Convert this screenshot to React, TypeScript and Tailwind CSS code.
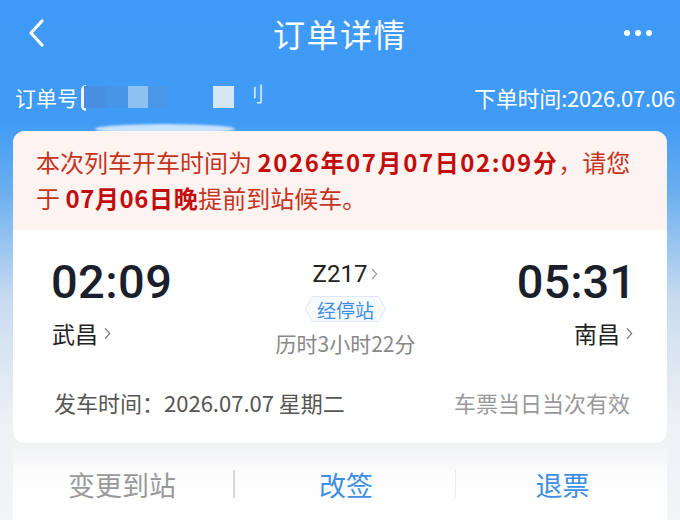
import React from "react";

const cjk = '"Noto Sans CJK SC", "Noto Sans", sans-serif';
const num = 'Roboto, "Noto Sans CJK SC", sans-serif';

function Chevron({ className = "" }: { className?: string }) {
  return (
    <svg viewBox="0 0 8 14" className={className} fill="none" stroke="currentColor" strokeWidth="1.3" strokeLinecap="round" strokeLinejoin="round">
      <path d="M1.5 1.5 L6.5 7 L1.5 12.5" />
    </svg>
  );
}

export default function App() {
  return (
    <div
      className="relative w-[680px] h-[520px] overflow-hidden bg-[linear-gradient(180deg,#3e9af6_0px,#3f9bf6_120px,#6aaef0_190px,#c9dcef_300px,#eef0f4_420px,#f4f5f7_520px)]"
      style={{ fontFamily: cjk }}
    >
      {/* top bar */}
      <div className="flex items-center h-[66px] px-[26px] text-white">
        <svg viewBox="0 0 20 30" className="w-[20px] h-[30px]" fill="none" stroke="white" strokeWidth="3.2" strokeLinecap="round" strokeLinejoin="round">
          <path d="M16 3 L5 15 L16 27" />
        </svg>
        <div className="flex-1 text-center text-[32px] leading-none tracking-[1.5px] pl-[10px]">订单详情</div>
        <div className="flex gap-[5px] items-center pr-[2px]">
          <span className="w-[6px] h-[6px] rounded-full bg-white" />
          <span className="w-[6px] h-[6px] rounded-full bg-white" />
          <span className="w-[6px] h-[6px] rounded-full bg-white" />
        </div>
      </div>

      {/* order meta row */}
      <div className="flex items-center justify-between h-[64px] pl-[15px] pr-[5px] text-white text-[21px] leading-none pb-[2px]">
        <div className="relative flex items-center">
          <span>订单号</span>
          <div className="relative w-[180px] h-[26px]">
            <span className="absolute left-[3px] top-[1px] w-[5px] h-[26px] bg-white/90 rounded-l-[6px]" />
            <span className="absolute left-[6px] top-[2px] w-[22px] h-[22px] bg-[#4a8fdf]" />
            <span className="absolute left-[28px] top-[2px] w-[22px] h-[22px] bg-[#4594e8]" />
            <span className="absolute left-[50px] top-[2px] w-[20px] h-[22px] bg-[#8ec1f0]" />
            <span className="absolute left-[70px] top-[2px] w-[20px] h-[22px] bg-[#4a96e8]" />
            <span className="absolute left-[135px] top-[2px] w-[21px] h-[22px] bg-[#d5e7f5]" />
            <span className="absolute left-[166px] top-[0px] text-[20px] text-white/80">刂</span>
          </div>
        </div>
        <span className="text-[22px] tracking-[-0.2px]">下单时间:2026.07.06</span>
      </div>

      {/* wavy blur under order number */}
      <div className="absolute left-[95px] top-[124px] w-[140px] h-[10px] rounded-[50%] bg-white/70 blur-[1px]" />

      {/* ticket card */}
      <div className="relative mx-[13px] mt-[1px] rounded-[12px] bg-white overflow-hidden">
        <div className="bg-[#fdf3f0] pl-[23px] pr-[6px] pt-[13px] pb-[14px] text-[24px] leading-[36px] text-[#c7331d]">
          本次列车开车时间为 <b className="text-[#c30d0d] font-bold tracking-[1.6px]">2026年07月07日02:09分</b>，请您
          <br />于 <b className="text-[#c30d0d] font-bold tracking-[0.6px]">07月06日晚</b>提前到站候车。
        </div>

        <div className="pl-[38px] pr-[31px] pt-[26px] pb-[27px]">
          <div className="flex justify-between">
            <div className="flex flex-col">
              <span className="text-[47px] leading-[52px] font-medium text-[#1a1f2b] tracking-[0.4px]" style={{ fontFamily: num }}>02:09</span>
              <span className="mt-[9px] flex items-center text-[23px] leading-[32px] text-[#222] pl-[1px]">
                武昌
                <Chevron className="w-[7px] h-[13px] ml-[6px] text-[#777]" />
              </span>
            </div>

            <div className="flex flex-col items-center pt-[3px] pl-[2px]">
              <span className="flex items-center text-[24px] leading-[30px] text-[#222]" style={{ fontFamily: num }}>
                Z217
                <Chevron className="w-[7px] h-[12px] ml-[4px] text-[#888]" />
              </span>
              <span className="relative mt-[7px] flex items-center h-[26px] px-[12px] text-[19px] leading-none text-[#3d8fe6]">
                <svg viewBox="0 0 88 26" preserveAspectRatio="none" className="absolute inset-0 w-full h-full" fill="#f7fbff" stroke="#dbe7f3" strokeWidth="1">
                  <path d="M8 0.5 L80 0.5 L87.5 13 L80 25.5 L8 25.5 L0.5 13 Z" />
                </svg>
                <span className="relative">经停站</span>
              </span>
              <span className="mt-[7px] text-[21px] leading-[28px] text-[#888]">历时3小时22分</span>
            </div>

            <div className="flex flex-col items-end">
              <span className="text-[47px] leading-[52px] font-medium text-[#1a1f2b]" style={{ fontFamily: num }}>05:31</span>
              <span className="mt-[9px] flex items-center text-[23px] leading-[32px] text-[#222] mr-[3px]">
                南昌
                <Chevron className="w-[7px] h-[13px] ml-[6px] text-[#777]" />
              </span>
            </div>
          </div>

          <div className="mt-[31px] flex justify-between items-center text-[22px] leading-[28px] pl-[3px]">
            <span className="text-[#555]">发车时间：2026.07.07 星期二</span>
            <span className="text-[#999] mr-[6px]">车票当日当次有效</span>
          </div>
        </div>
      </div>

      {/* actions */}
      <div className="mx-[13px] mt-[2px] h-[76px] bg-[linear-gradient(180deg,#f1f2f4_0px,#fbfbfc_24px,#ffffff_50px)] flex items-center text-[27px] leading-none pt-[2px]">
        <div className="w-[220px] flex justify-center text-[#999] pr-[2px]">变更到站</div>
        <div className="w-[2px] h-[28px] bg-[#d6d6d6]" />
        <div className="w-[220px] flex justify-center text-[#3d8fe6] pl-[2px]">改签</div>
        <div className="w-[1px] h-[28px] bg-[#ececec]" />
        <div className="flex-1 flex justify-center text-[#3d8fe6] pl-[2px]">退票</div>
      </div>
    </div>
  );
}
